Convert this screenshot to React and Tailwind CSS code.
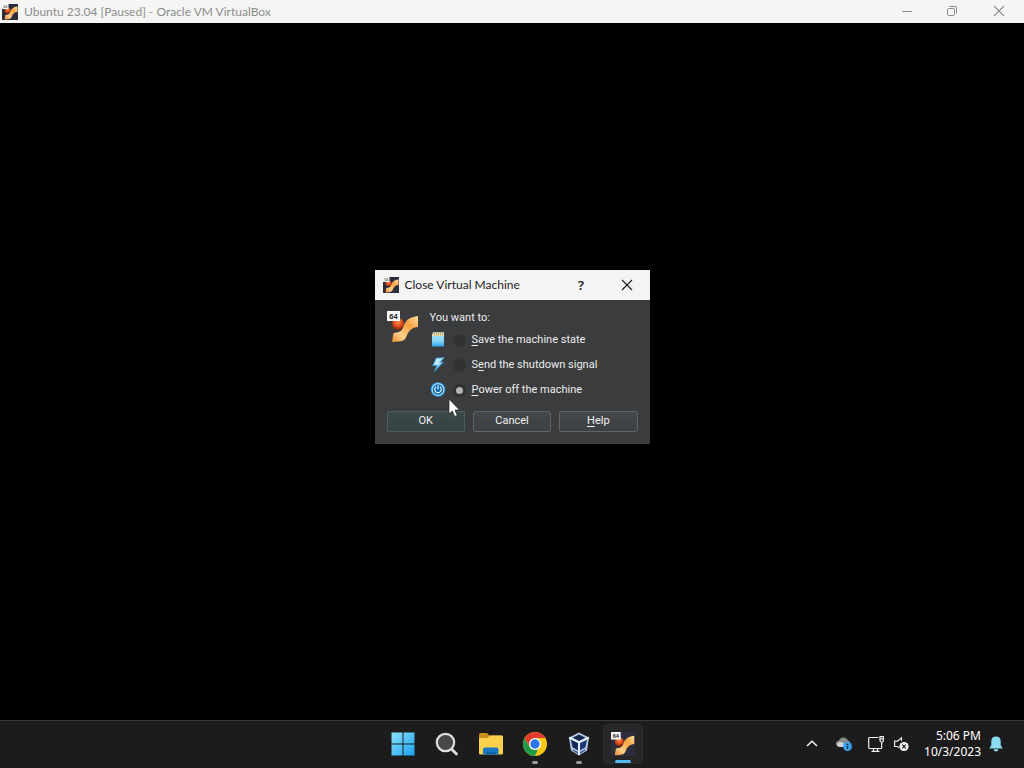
import React, { useState } from "react";

function MachineArt() {
  return (
    <g>
      <defs>
        <linearGradient id="ribbon" x1="0" y1="1" x2="1" y2="0">
          <stop offset="0" stopColor="#e8892c" />
          <stop offset="0.3" stopColor="#ffd08a" />
          <stop offset="0.65" stopColor="#f7a443" />
          <stop offset="1" stopColor="#ffe0a0" />
        </linearGradient>
        <radialGradient id="ball" cx="0.5" cy="0.35" r="0.65">
          <stop offset="0" stopColor="#ff8a4a" />
          <stop offset="0.6" stopColor="#d8481c" />
          <stop offset="1" stopColor="#7c2208" />
        </radialGradient>
      </defs>
      <circle cx="11" cy="13" r="6" fill="url(#ball)" />
      <path
        d="M5 31L6.500 22C11 21.500 14 21 16 17C18 11 20 6.500 31 5V16C26 16.500 24 18 21 22C19 26 19 30 12 30.500Z"
        fill="url(#ribbon)"
      />
    </g>
  );
}

function MachineIcon({ className, tile, inkClass = "fill-[#161616]" }) {
  return (
    <svg className={className} viewBox="0 0 32 32" aria-hidden="true">
      {tile && <rect width="32" height="32" fill="#2b2c3c" />}
      <MachineArt />
      <rect x="0" y="0" width="13" height="10" fill="#f7f7f7" />
      <text className={inkClass} x="6.500" y="7.700" textAnchor="middle" fontSize="7.500" fontWeight="700" fontFamily="Liberation Sans, sans-serif">
        64
      </text>
    </svg>
  );
}

function CloseGlyph({ className }) {
  return (
    <svg className={className} viewBox="0 0 12 12" fill="none" stroke="currentColor" strokeWidth="1.1" aria-hidden="true">
      <path d="M1 1L11 11M11 1L1 11" />
    </svg>
  );
}

function CardIcon() {
  return (
    <svg className="size-4" viewBox="0 0 16 16" aria-hidden="true">
      <defs>
        <linearGradient id="card" x1="0" y1="0" x2="0" y2="1">
          <stop offset="0" stopColor="#a8e4fb" />
          <stop offset="0.6" stopColor="#8ad6f8" />
          <stop offset="1" stopColor="#2aa4ea" />
        </linearGradient>
      </defs>
      <path d="M3 0.500H14V14.500H2V3.500Z" fill="url(#card)" />
      <path d="M3 0.500H14V4H2Z" fill="#f2e6b4" />
      <path d="M4.500 1V3.500M6.500 1V3.500M8.500 1V3.500M10.500 1V3.500M12.500 1V3.500" stroke="#8f8350" strokeWidth="0.7" />
    </svg>
  );
}

function BoltIcon() {
  return (
    <svg className="size-4" viewBox="0 0 16 16" aria-hidden="true">
      <path d="M6 1L14.500 0.500L10.500 5H13.500L4 15L7 8.800H2.500Z" fill="#6cc6f6" stroke="#2390d8" strokeWidth="0.5" />
      <path d="M6.800 1.800L12.500 1.400L8.500 6H11L6.500 10.500L8.300 7.800H4Z" fill="#bfeaff" />
    </svg>
  );
}

function PowerIcon() {
  return (
    <svg className="size-4" viewBox="0 0 16 16" fill="none" aria-hidden="true">
      <circle cx="8" cy="7.500" r="7.300" fill="#2a93e4" />
      <circle cx="8" cy="7.500" r="5.900" fill="#1667a8" stroke="#a5dcfa" strokeWidth="1.200" />
      <path d="M6 4.800A3.300 3.300 0 1 0 10 4.800M8 3.200V7.500" stroke="#d8f2ff" strokeWidth="1.200" />
    </svg>
  );
}

function StartIcon() {
  return (
    <svg className="size-6" viewBox="0 0 24 24" aria-hidden="true">
      <defs>
        <linearGradient id="win" x1="0" y1="0" x2="1" y2="1">
          <stop offset="0" stopColor="#8be4fc" />
          <stop offset="1" stopColor="#1aa0ee" />
        </linearGradient>
      </defs>
      <path d="M0.500 0.500H11.500V11.500H0.500ZM12.500 0.500H23.500V11.500H12.500ZM0.500 12.500H11.500V23.500H0.500ZM12.500 12.500H23.500V23.500H12.500Z" fill="url(#win)" />
    </svg>
  );
}

function SearchIcon() {
  return (
    <svg className="size-6" viewBox="0 0 24 24" aria-hidden="true">
      <path d="M16.500 17L21.500 22" stroke="#dedede" strokeWidth="2.800" strokeLinecap="round" />
      <circle cx="10.500" cy="10.500" r="8.700" fill="#47484a" stroke="#dedede" strokeWidth="2.200" />
    </svg>
  );
}

function FolderIcon() {
  return (
    <svg className="size-6" viewBox="0 0 24 24" aria-hidden="true">
      <path d="M0 2.500Q0 1 1.500 1H8L10.500 3.500H22.500Q24 3.500 24 5V8H0Z" fill="#c98f18" />
      <path d="M0 6H8L11 3.500H22.500Q24 3.500 24 5V21.500Q24 22.500 23 22.500H1Q0 22.500 0 21.500Z" fill="#fbd04c" />
      <path d="M4 22.500V17.500Q4 15.500 6 15.500H17.500Q19.500 15.500 19.500 17.500V22.500Z" fill="#1878c4" />
      <path d="M7 22.500V21Q7 20 8 20H15.500Q16.500 20 16.500 21V22.500Z" fill="#0f60a4" />
    </svg>
  );
}

function ChromeIcon() {
  return (
    <svg className="size-6" viewBox="0 0 24 24" aria-hidden="true">
      <circle cx="12" cy="12" r="12" fill="#fbc817" />
      <path d="M12 24A12 12 0 0 1 1.610 6L6.800 15L12 18L15 17.200Z" fill="#229a4b" />
      <path d="M12 6H22.390A12 12 0 0 0 1.610 6L6.800 15L7 9Z" fill="#e33b2e" />
      <circle cx="12" cy="12" r="6" fill="#fff" />
      <circle cx="12" cy="12" r="4.700" fill="#2d78e8" />
    </svg>
  );
}

function CubeIcon() {
  return (
    <svg className="size-6" viewBox="0 0 24 24" aria-hidden="true">
      <path d="M12 0.500L22 5.500L20 18.500L12 23.500L4 18.500L2 5.500Z" fill="#b9cbe6" />
      <path d="M12 2.500L18.500 5.800L12 9L5.500 5.800Z" fill="#14264c" />
      <path d="M3.800 7.500L11 11V18.500L5.500 15.300Z" fill="#132a5a" />
      <path d="M20.200 7.500L13 11V18.500L18.500 15.300Z" fill="#1d3b78" />
      <path d="M5.500 17L11 20V22L6 18.800ZM18.500 17L13 20V22L18 18.800Z" fill="#42619a" />
      <path d="M2 5.500L12 10.200L22 5.500M12 10V23" stroke="#eaf2fc" strokeWidth="1.700" fill="none" />
    </svg>
  );
}

function ChevronIcon() {
  return (
    <svg className="size-3" viewBox="0 0 12 12" fill="none" aria-hidden="true">
      <path d="M1 8L6 3.200L11 8" stroke="#f2f2f2" strokeWidth="1.500" />
    </svg>
  );
}

function CloudIcon() {
  return (
    <svg className="size-4" viewBox="0 0 16 16" aria-hidden="true">
      <path d="M4 10.500Q0 10.500 0 7.500Q0 5 3 4.500Q4 1.500 7.500 1.500Q10.500 1.500 12 4.500Q14 5 14.500 7L9 11Z" fill="#8b8c8e" />
      <path d="M1 8Q3 5 6.500 6.500L11 9L8 11H4Q1 11 1 8Z" fill="#d3d4d6" />
      <circle cx="11.500" cy="10.500" r="4.500" fill="#3ca0e8" />
      <path d="M11.500 9.800V13M11.500 7.700V9" stroke="#082f50" strokeWidth="1.400" />
    </svg>
  );
}

function NetworkIcon() {
  return (
    <svg className="size-4" viewBox="0 0 16 16" fill="none" stroke="#ededed" strokeWidth="1.200" aria-hidden="true">
      <path d="M10.500 1.500H1.500Q0.700 1.500 0.700 2.300V11.500Q0.700 12.500 1.500 12.500H13Q13.700 12.500 13.700 11.500V7M5.500 12.500V15.300M9.500 12.500V15.300M3.500 15.400H11.500" />
      <path d="M12 0.700H15.400V4.500Q15.400 6 13.700 6Q12 6 12 4.500ZM12 2.800H15.400M13.700 6V8" />
    </svg>
  );
}

function MutedIcon() {
  return (
    <svg className="size-4" viewBox="0 0 16 16" fill="none" aria-hidden="true">
      <path d="M8.500 5V1.800L4.500 5.200H1.600V10.500H4.500L6 11.800" stroke="#e6e6e6" strokeWidth="1.200" />
      <circle cx="11" cy="10.500" r="4.600" fill="#f2f2f2" />
      <path d="M9.200 8.700L12.800 12.300M12.800 8.700L9.200 12.300" stroke="#1c1c1c" strokeWidth="1.200" />
    </svg>
  );
}

function BellIcon() {
  return (
    <svg className="size-4" viewBox="0 0 16 16" aria-hidden="true">
      <path d="M8 0.500Q12.700 0.500 12.700 5.500V9L14.700 12.500H1.300L3.300 9V5.500Q3.300 0.500 8 0.500ZM5.500 13.300H10.500Q10 15.500 8 15.500Q6 15.500 5.500 13.300Z" fill="#8adcf2" />
    </svg>
  );
}

const options = [
  { id: "save", icon: <CardIcon />, letter: "S", before: "", after: "ave the machine state" },
  { id: "shutdown", icon: <BoltIcon />, letter: "e", before: "S", after: "nd the shutdown signal" },
  { id: "poweroff", icon: <PowerIcon />, letter: "P", before: "", after: "ower off the machine" },
];

const buttonStyle =
  "h-[21px] rounded-[2px] border border-[#606466] bg-linear-to-b from-[#45484a] to-[#3d4042] text-[11px] leading-4 text-[#f0f0f0]";
const okStyle =
  "h-[21px] rounded-[2px] border border-[#4c5f60] bg-linear-to-b from-[#3c4a4c] to-[#354143] text-[11px] leading-4 text-[#f0f0f0]";

function CloseDialog() {
  const [choice, setChoice] = useState("poweroff");
  return (
    <section
      role="dialog"
      aria-labelledby="dialog-title"
      className="relative w-[275px] bg-[#3a3c3d] font-['Roboto',sans-serif] text-[11px] leading-4 text-[#ededed]"
    >
      <header className="flex h-[30px] items-center bg-[#f4f4f5] pl-2 text-[#1b1b1b]">
        <MachineIcon className="size-4 shrink-0" tile inkClass="fill-[#777777]" />
        <h1 id="dialog-title" className="ml-[6px] flex-1 font-['Lato','Noto_Sans',sans-serif] text-[12px] leading-4 font-normal">
          Close Virtual Machine
        </h1>
        <button type="button" aria-label="What's this?" className="h-full w-[45px] font-['Noto_Sans',sans-serif] text-[13px] font-semibold">
          ?
        </button>
        <button type="button" aria-label="Close" className="flex h-full w-[46px] items-center justify-center">
          <CloseGlyph className="size-3" />
        </button>
      </header>
      <form className="px-3 pt-[10px] pb-3" onSubmit={(e) => e.preventDefault()}>
        <div className="flex gap-[11px]">
          <MachineIcon className="mt-px size-8 shrink-0" />
          <fieldset className="flex-1">
            <legend className="pb-[2px]">You want to:</legend>
            {options.map((o) => (
              <div key={o.id} className="flex h-[25px] items-center">
                {o.icon}
                <input
                  type="radio"
                  id={o.id}
                  name="action"
                  checked={choice === o.id}
                  onChange={() => setChoice(o.id)}
                  className="ml-[7px] size-[13px] appearance-none rounded-full border-[3px] border-[#303233] bg-[#303233] checked:bg-[#b4b4b4]"
                />
                <label htmlFor={o.id} className="ml-[6px] whitespace-nowrap">
                  {o.before}
                  <span className="underline underline-offset-2">{o.letter}</span>
                  {o.after}
                </label>
              </div>
            ))}
          </fieldset>
        </div>
        <div className="mt-2 grid grid-cols-3 gap-2">
          <button type="submit" className={okStyle}>OK</button>
          <button type="button" className={buttonStyle}>Cancel</button>
          <button type="button" className={buttonStyle}>
            <span className="underline underline-offset-2">H</span>elp
          </button>
        </div>
      </form>
      <svg className="absolute top-32 left-[73px] h-5 w-3" viewBox="0 0 12 20" aria-hidden="true">
        <path d="M1 1V16L4.300 13L6.700 18.500L9.300 17.400L7 12H11.500Z" fill="#fff" stroke="#222" strokeWidth="0.7" />
      </svg>
    </section>
  );
}

const apps = [
  { name: "Start", icon: <StartIcon /> },
  { name: "Search", icon: <SearchIcon /> },
  { name: "File Explorer", icon: <FolderIcon /> },
  { name: "Google Chrome", icon: <ChromeIcon />, state: "open" },
  { name: "Oracle VM VirtualBox", icon: <CubeIcon />, state: "open" },
  { name: "Ubuntu 23.04", icon: <MachineIcon className="size-6" tile />, state: "active" },
];

function Taskbar() {
  return (
    <footer className="grid h-12 grid-cols-[1fr_auto_1fr] items-center border-t border-[#3a3a3a] bg-[#1c1c1c] pb-px text-white">
      <div />
      <nav className="flex gap-1 pl-px" aria-label="Taskbar">
        {apps.map((a) => (
          <button
            key={a.name}
            type="button"
            aria-label={a.name}
            className={
              a.state === "active"
                ? "relative flex size-10 items-center justify-center rounded-[4px] border border-[#2b2b2b] bg-[#272727]"
                : "relative flex size-10 items-center justify-center rounded-[4px]"
            }
          >
            {a.icon}
            {a.state === "open" && <span className="absolute bottom-0 h-[3px] w-[6px] rounded-full bg-[#9a9a9a]" />}
            {a.state === "active" && <span className="absolute bottom-0 h-[3px] w-4 rounded-full bg-[#55b8ee]" />}
          </button>
        ))}
      </nav>
      <div className="flex items-center justify-end pr-5">
        <button type="button" aria-label="Show hidden icons" className="mr-[18px]"><ChevronIcon /></button>
        <button type="button" aria-label="Updates" className="mr-4"><CloudIcon /></button>
        <button type="button" aria-label="Network" className="mr-[9px]"><NetworkIcon /></button>
        <button type="button" aria-label="Volume" className="mr-[15px]"><MutedIcon /></button>
        <time className="mr-[7px] text-right text-[12px] leading-4" dateTime="2023-10-03T17:06">
          5:06 PM
          <br />
          10/3/2023
        </time>
        <button type="button" aria-label="Notifications"><BellIcon /></button>
      </div>
    </footer>
  );
}

export default function App() {
  return (
    <div className="flex min-h-screen flex-col bg-black font-['Noto_Sans',sans-serif]">
      <header className="flex h-[23px] items-center bg-[#f5f5f4] pl-[2px] text-[#8c8c8c]">
        <MachineIcon className="size-4 shrink-0" tile inkClass="fill-[#777777]" />
        <p className="ml-[6px] flex-1 font-['Lato','Noto_Sans',sans-serif] text-[12px] leading-4">Ubuntu 23.04 [Paused] - Oracle VM VirtualBox</p>
        <button type="button" aria-label="Minimize" className="flex h-full w-[45px] items-center justify-center pb-[2px]">
          <svg className="h-3 w-3" viewBox="0 0 12 12" fill="none" stroke="currentColor" aria-hidden="true">
            <path d="M1 6.500H11" />
          </svg>
        </button>
        <button type="button" aria-label="Restore" className="flex h-full w-[45px] items-center justify-center pb-[2px]">
          <svg className="h-3 w-3" viewBox="0 0 12 12" fill="none" stroke="currentColor" aria-hidden="true">
            <rect x="1.500" y="3.500" width="7" height="7" rx="1" />
            <path d="M3.500 1.500H9Q10.500 1.500 10.500 3V8.500" />
          </svg>
        </button>
        <button type="button" aria-label="Close window" className="flex h-full w-[50px] items-center justify-center pb-[2px]">
          <CloseGlyph className="size-3" />
        </button>
      </header>
      <main className="flex flex-1 items-center justify-center pb-[30px]">
        <CloseDialog />
      </main>
      <Taskbar />
    </div>
  );
}
